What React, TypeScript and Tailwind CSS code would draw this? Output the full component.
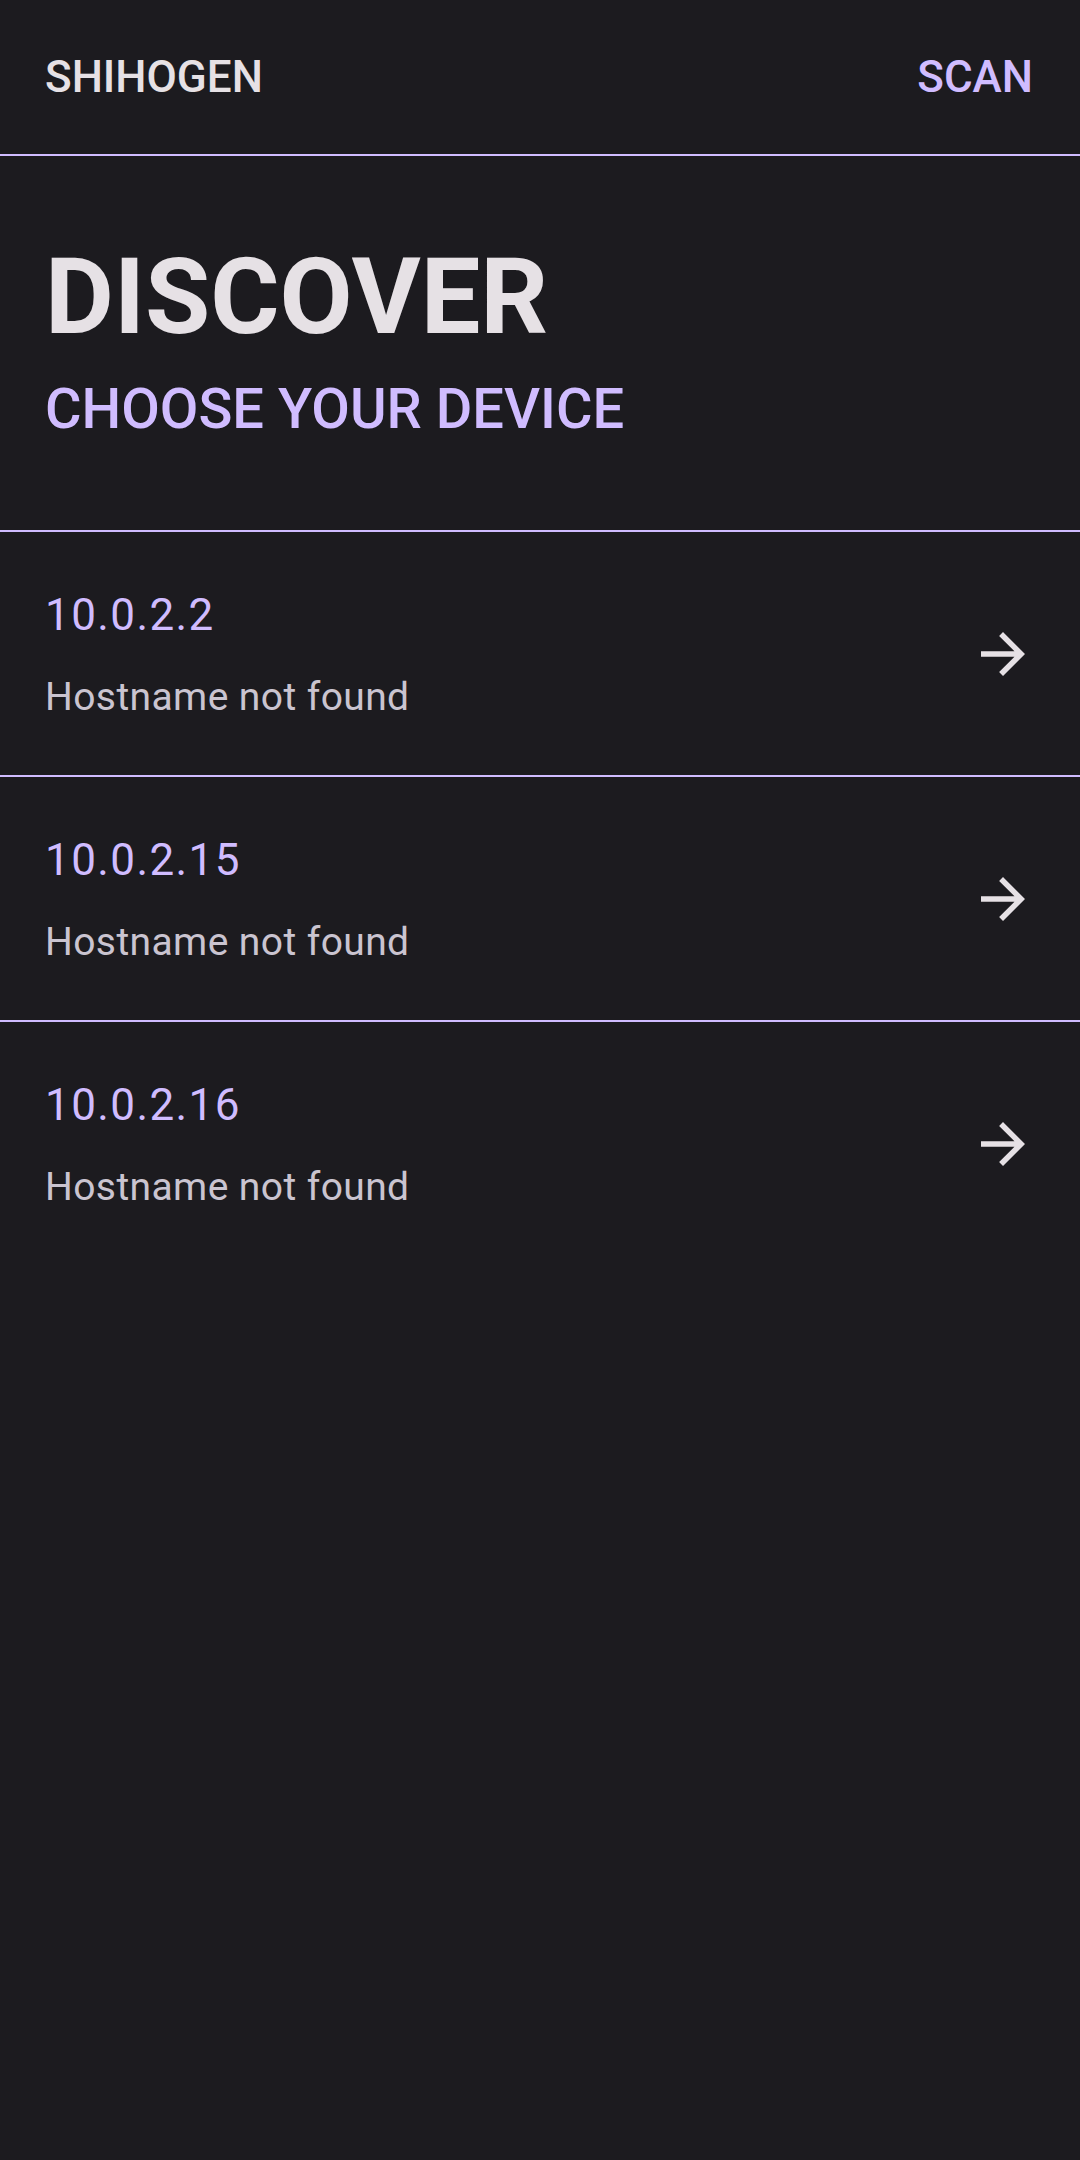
import React from 'react';

const devices = [
  { ip: '10.0.2.2', host: 'Hostname not found' },
  { ip: '10.0.2.15', host: 'Hostname not found' },
  { ip: '10.0.2.16', host: 'Hostname not found' },
];

const ArrowForward: React.FC = () => (
  <svg viewBox="0 0 24 24" className="w-[66px] h-[66px] fill-[#e6e1e5]">
    <path d="M12 4l-1.41 1.41L16.17 11H4v2h12.17l-5.58 5.59L12 20l8-8z" />
  </svg>
);

const App: React.FC = () => {
  return (
    <div className="min-h-[2160px] w-full bg-[#1c1b1f] font-['Roboto',sans-serif]">
      {/* top bar */}
      <header className="h-[156px] flex items-center justify-between pl-[45px] pr-[47px] border-b-2 border-[#d0bcff]">
        <span className="text-[44px] leading-[60px] font-medium text-[#e6e1e5]">SHIHOGEN</span>
        <button className="text-[44px] leading-[60px] font-medium text-[#d0bcff]">SCAN</button>
      </header>

      {/* heading */}
      <section className="px-[45px] pt-[81px] pb-[86px] border-b-2 border-[#d0bcff] flex flex-col gap-[17px]">
        <h1 className="text-[106px] leading-[120px] font-bold text-[#e6e1e5]">DISCOVER</h1>
        <h2 className="text-[56px] leading-[70px] font-medium text-[#d0bcff]">CHOOSE YOUR DEVICE</h2>
      </section>

      {/* device list */}
      <ul className="divide-y-2 divide-[#d0bcff]">
        {devices.map((d) => (
          <li key={d.ip} className="flex items-center justify-between pl-[45px] pr-[44px] pt-[53px] pb-[52px]">
            <div className="flex flex-col gap-[26px]">
              <span className="text-[44px] leading-[60px] tracking-[1.4px] text-[#d0bcff]">{d.ip}</span>
              <span className="text-[39px] leading-[52px] tracking-[0.4px] text-[#cac4d0]">{d.host}</span>
            </div>
            <ArrowForward />
          </li>
        ))}
      </ul>
    </div>
  );
};

export default App;
